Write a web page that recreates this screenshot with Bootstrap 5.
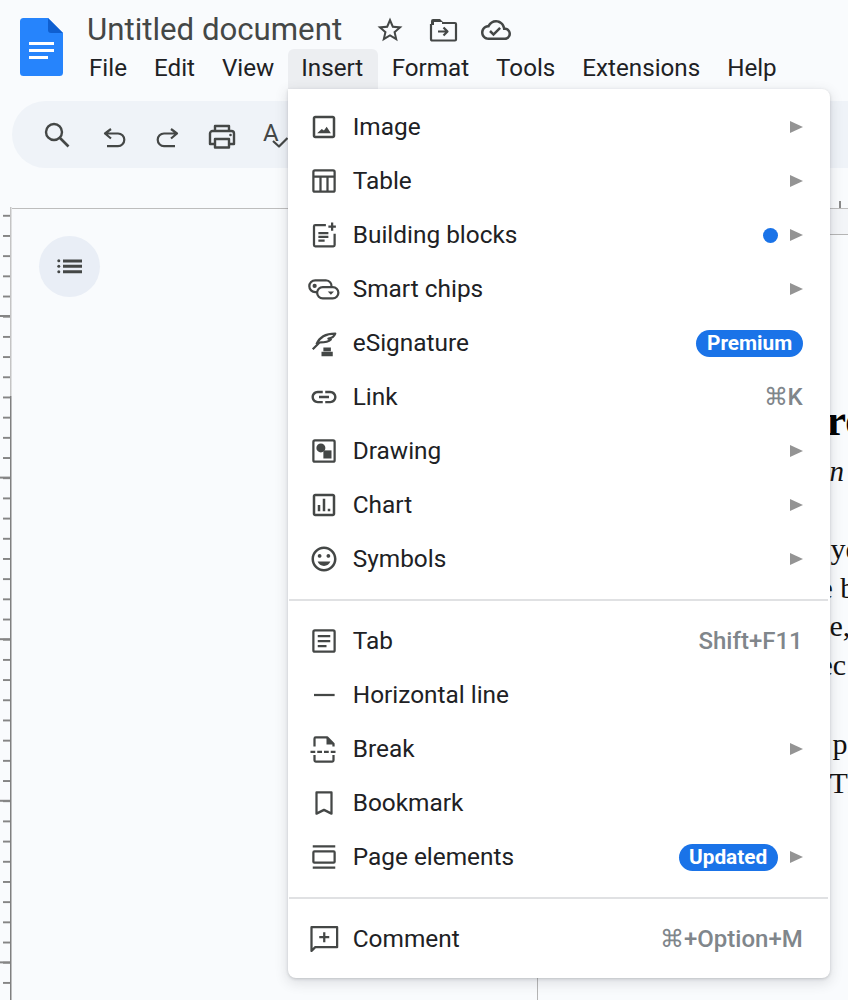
<!doctype html>
<html lang="en">
<head>
<meta charset="utf-8">
<title>Untitled document</title>
<link href="https://cdn.jsdelivr.net/npm/bootstrap@5.3.0/dist/css/bootstrap.min.css" rel="stylesheet">
<style>
html,body{height:1000px;overflow:hidden}
body{background:#f9fbfd;font-family:Roboto,"Liberation Sans",sans-serif;color:#202124}
svg{display:block;flex:none}
.ic{width:30px;height:30px;fill:#444746;overflow:visible}
.st{fill:none;stroke:#444746;stroke-width:1.8;stroke-linejoin:round}
.doc-head{padding:13px 0 0 20px;height:88px}
.doc-logo{width:43px;height:58px;margin-top:5px;margin-right:12.5px}
.doc-title-row{height:34px;margin-bottom:2px;padding-left:11.5px;gap:23px}
.doc-title{font-size:31.2px;line-height:34px;color:#444746;margin-right:10px;font-weight:400}
.doc-menubar{height:40px}
.doc-menubtn{font-size:24.2px;line-height:37px;padding:0 13.5px 2px;color:#202124;border:0;background:none;border-radius:0}
.dropdown.open-top>.doc-menubtn{background:#eceef1;border-radius:6px 6px 0 0;padding:0 15px 2px 13.5px;color:#202124;height:40px}
.doc-toolbar{height:67px;margin:13px 0 0 12px;background:#eff3f8;border-radius:33.5px 0 0 33.5px;padding-left:75px}
.doc-toolbtn{width:54px;height:67px;padding:0}
.doc-toolbtn svg{margin:0 auto}
.doc-searchbtn{margin-left:-57px;margin-right:3px}
.doc-work{margin-top:40px;height:792px}
.doc-vruler{width:11.5px;flex:none;margin-top:-1px;background-image:linear-gradient(#c4c4c4 189px,#808080 189px),linear-gradient(#858585 1.6px,transparent 1.6px),linear-gradient(#858585 1.6px,transparent 1.6px);background-repeat:no-repeat,repeat-y,repeat-y;background-size:1.5px 100%,7px 20.2px,10px 161.6px;background-position:10px 0,3px 28px,0 108px}
.doc-pageleft{width:526px;flex:none;border-top:1px solid #bdbdbd;border-right:1.5px solid #b5b5b5;padding:27px 0 0 27px}
.doc-tocbtn{width:61px;height:61px;border-radius:50%;background:#e9eef6;border:0;padding:0}
.doc-tocbtn svg{margin:-3px auto 0}
.doc-pageright{border-top:1px solid #bdbdbd;font-family:"Liberation Serif",serif;color:#111;white-space:nowrap;padding-left:292px;min-width:0}
.doc-hruler{height:26px;border-bottom:1px solid #b5b5b5;margin-left:-292px;background:#f3f5f8;position:relative}
.doc-hruler::after{content:"";position:absolute;right:7.5px;top:-8px;width:1.5px;height:7px;background:#8a8a8a}
.doc-lead{font-size:44px;line-height:44px;font-weight:700;margin-top:164px;color:#000;margin-left:-3px}
.doc-sub{font-size:29px;line-height:32px;font-style:italic;margin-top:12px}
.doc-ln{font-size:30px;line-height:38.500px}
.doc-gap1{margin-top:43px;margin-left:1px}
.doc-gap2{margin-top:41px;margin-left:3px}
.doc-cut{margin-left:-10px}
.doc-dd.dropdown-menu{display:block;position:absolute;left:0;top:100%;width:542px;margin:0;padding:11px 0 12px;background:#fff;border:0;border-radius:0 8px 8px 8px;box-shadow:0 1px 3px rgba(60,64,67,.22),0 4px 12px 2px rgba(60,64,67,.13);z-index:10}
.doc-dd .dropdown-item{height:54px;display:flex;align-items:center;padding:0 27px 0 21.5px;color:#202124;font-size:24.4px;line-height:54px;white-space:nowrap}
.doc-dd .dropdown-item .ic{margin-right:13.5px}
.doc-dd .dropdown-divider{margin:13px 2px 13px 1px;border-top:2px solid #e0e1e3;opacity:1}
.doc-arrow{width:0;height:0;border-left:13px solid #949494;border-top:6.5px solid transparent;border-bottom:6.5px solid transparent;margin-left:12px;flex:none}
.doc-dot{width:15px;height:15px;border-radius:50%;background:#1a73e8;flex:none}
.doc-pill.badge{background:#1a73e8;color:#fff;font-size:20.8px;font-weight:700;line-height:27px;padding:0 10.5px;height:27px;border-radius:14px}
.doc-key{color:#80868b;font-weight:500;font-size:24px}
</style>
</head>
<body>
<header class="doc-head d-flex">
  <svg class="doc-logo" viewBox="0 0 43 58"><path fill="#2684fc" d="M3.500 0H28l15 15v39.500a3.500 3.500 0 0 1-3.500 3.500h-36A3.500 3.500 0 0 1 0 54.500v-51A3.500 3.500 0 0 1 3.500 0z"/><path fill="#0f5fd0" d="M28 0l15 15H31a3 3 0 0 1-3-3z"/><path fill="#fff" d="M9 24h25v3H9zm0 7h25v3H9zm0 7h19v3H9z"/></svg>
  <div>
    <div class="doc-title-row d-flex align-items-center">
      <span class="doc-title">Untitled document</span>
      <svg class="ic" viewBox="0 0 24 24"><path d="M22 9.240l-7.190-.62L12 2 9.190 8.630 2 9.240l5.460 4.730L5.820 21 12 17.270 18.180 21l-1.630-7.030L22 9.240zM12 15.400l-3.760 2.270 1-4.280-3.320-2.880 4.380-.38L12 6.100l1.710 4.040 4.380.38-3.320 2.880 1 4.280L12 15.400z"/></svg>
      <svg class="ic" viewBox="0 0 30 30"><path fill="#444746" d="M3 6a2 2 0 0 1 2-2h7l3 3h-9v3H3z"/><path class="st" style="stroke-width:2.200" d="M3 9V24a1.500 1.500 0 0 0 1.500 1.500H27a1 1 0 0 0 1-1V9a1 1 0 0 0-1-1H14"/><path class="st" style="stroke-width:2.200" d="M10 16.500h9M15.500 12.500l4 4-4 4"/></svg>
      <svg class="ic" viewBox="0 0 24 24"><path d="M19.350 10.040C18.670 6.590 15.640 4 12 4 9.110 4 6.600 5.640 5.350 8.040 2.340 8.360 0 10.910 0 14c0 3.310 2.690 6 6 6h13c2.760 0 5-2.240 5-5 0-2.640-2.050-4.780-4.650-4.960zM19 18H6c-2.210 0-4-1.790-4-4 0-2.050 1.530-3.760 3.560-3.970l1.070-.11.500-.95C8.080 7.140 9.940 6 12 6c2.620 0 4.880 1.860 5.390 4.430l.300 1.500 1.530.11c1.560.100 2.780 1.410 2.780 2.960 0 1.650-1.350 3-3 3zm-9-3.820l-2.090-2.090L6.500 13.500 10 17l6.010-6.010-1.410-1.410z"/></svg>
    </div>
    <nav class="doc-menubar d-flex">
      <button class="btn doc-menubtn">File</button>
      <button class="btn doc-menubtn">Edit</button>
      <button class="btn doc-menubtn">View</button>
      <div class="dropdown open-top">
        <button class="btn doc-menubtn">Insert</button>
        <div class="dropdown-menu show doc-dd">
          <a class="dropdown-item" href="#"><svg class="ic" viewBox="0 0 24 24"><path d="M19 5v14H5V5h14m0-2H5c-1.100 0-2 .9-2 2v14c0 1.100.9 2 2 2h14c1.100 0 2-.9 2-2V5c0-1.100-.9-2-2-2zm-4.860 8.860l-2.200 2.870L10.200 13.500 6.500 17h11l-3.360-5.140z"/></svg>Image<span class="ms-auto doc-arrow"></span></a>
          <a class="dropdown-item" href="#"><svg class="ic" viewBox="0 0 24 24"><rect class="st" x="3.500" y="3.500" width="17" height="17" rx="1.200"/><path class="st" d="M3.500 8.500h17M9.200 8.500v12M14.800 8.500v12"/></svg>Table<span class="ms-auto doc-arrow"></span></a>
          <a class="dropdown-item" href="#"><svg class="ic" viewBox="0 0 24 24"><path class="st" d="M13.500 4H5a1 1 0 0 0-1 1v15a1 1 0 0 0 1 1h14.500a1 1 0 0 0 1-1v-9"/><path class="st" d="M18.500 2v6.500M15.500 5.200h6M7.500 10.500h8M7.500 13.500h8M7.500 16.500h5"/></svg>Building blocks<span class="ms-auto doc-dot"></span><span class="doc-arrow"></span></a>
          <a class="dropdown-item" href="#"><svg class="ic" viewBox="0 0 24 24"><path class="st" d="M18 10.500A4.700 4.700 0 0 0 13.500 5H5a4.700 4.700 0 0 0 0 9.500h1.500"/><rect class="st" x="6.500" y="10.500" width="17" height="9" rx="4.500"/><circle cx="4.500" cy="9.500" r="1.700"/><path d="M15 14h5l-2.500 2.500z"/></svg>Smart chips<span class="ms-auto doc-arrow"></span></a>
          <a class="dropdown-item" href="#"><svg class="ic" viewBox="0 0 24 24"><path class="st" d="M3 17l6-6M6 13C8 8 13 4.500 21 4.500 20 7 18 8.200 15.500 8.500l2 .7C15 11.500 12 11.500 9 11.500"/><path d="M11.500 15.500h6v3h-6zM10 19h9v3.500h-9z"/></svg>eSignature<span class="ms-auto badge rounded-pill doc-pill">Premium</span></a>
          <a class="dropdown-item" href="#"><svg class="ic" viewBox="0 0 24 24"><path d="M3.900 12c0-1.710 1.390-3.100 3.100-3.100h4V7H7c-2.760 0-5 2.240-5 5s2.240 5 5 5h4v-1.900H7c-1.710 0-3.100-1.390-3.100-3.100zM8 13h8v-2H8v2zm9-6h-4v1.900h4c1.710 0 3.100 1.390 3.100 3.100s-1.390 3.100-3.100 3.100h-4V17h4c2.760 0 5-2.240 5-5s-2.240-5-5-5z"/></svg>Link<span class="ms-auto doc-key">⌘K</span></a>
          <a class="dropdown-item" href="#"><svg class="ic" viewBox="0 0 24 24"><rect class="st" x="3.500" y="3.500" width="17" height="17" rx="1.200"/><circle cx="9.500" cy="9.500" r="3.600"/><path d="M11.500 11.500h6.500v6.500h-6.500z"/></svg>Drawing<span class="ms-auto doc-arrow"></span></a>
          <a class="dropdown-item" href="#"><svg class="ic" viewBox="0 0 24 24"><path d="M19 3H5c-1.100 0-2 .9-2 2v14c0 1.100.9 2 2 2h14c1.100 0 2-.9 2-2V5c0-1.100-.9-2-2-2zm0 16H5V5h14v14zM7 12h2v5H7zm4-5h2v10h-2zm4 8h2v2h-2z"/></svg>Chart<span class="ms-auto doc-arrow"></span></a>
          <a class="dropdown-item" href="#"><svg class="ic" viewBox="0 0 24 24"><path d="M11.990 2C6.470 2 2 6.480 2 12s4.470 10 9.990 10C17.520 22 22 17.520 22 12S17.520 2 11.990 2zM12 20c-4.420 0-8-3.580-8-8s3.580-8 8-8 8 3.580 8 8-3.580 8-8 8zm3.500-9c.83 0 1.500-.67 1.500-1.500S16.330 8 15.500 8 14 8.670 14 9.500s.67 1.500 1.500 1.500zm-7 0c.83 0 1.500-.67 1.500-1.500S9.330 8 8.500 8 7 8.670 7 9.500 7.670 11 8.500 11zm3.500 6.500c2.330 0 4.310-1.460 5.110-3.500H6.890c.8 2.040 2.780 3.500 5.110 3.500z"/></svg>Symbols<span class="ms-auto doc-arrow"></span></a>
          <hr class="dropdown-divider">
          <a class="dropdown-item" href="#"><svg class="ic" viewBox="0 0 24 24"><rect class="st" x="3.500" y="3.500" width="17" height="17" rx="1.200"/><path class="st" d="M7 8h10M7 12h10M7 16h7"/></svg>Tab<span class="ms-auto doc-key">Shift+F11</span></a>
          <a class="dropdown-item" href="#"><svg class="ic" viewBox="0 0 24 24"><path class="st" d="M4 12h16.500"/></svg>Horizontal line</a>
          <a class="dropdown-item" href="#"><svg class="ic" viewBox="0 0 24 24"><path class="st" d="M4.400 10V3.700a1 1 0 0 1 1-1H14.500l5.100 5.100V10M4.400 16.800V21a1 1 0 0 0 1 1h13.200a1 1 0 0 0 1-1v-4.200"/><path fill="#444746" d="M14 2.700l5.600 5.600H14z"/><path class="st" stroke-dasharray="3.800 1.600" d="M1.200 14.200h20.800"/></svg>Break<span class="ms-auto doc-arrow"></span></a>
          <a class="dropdown-item" href="#"><svg class="ic" viewBox="0 0 24 24"><path class="st" d="M6 3.500h12v17l-6-3-6 3z"/></svg>Bookmark</a>
          <a class="dropdown-item" href="#"><svg class="ic" viewBox="0 0 24 24"><path class="st" d="M3 3.500h18M3 20.500h18"/><rect class="st" x="3.500" y="7.500" width="17" height="9" rx=".8"/></svg>Page elements<span class="ms-auto badge rounded-pill doc-pill">Updated</span><span class="doc-arrow"></span></a>
          <hr class="dropdown-divider">
          <a class="dropdown-item" href="#"><svg class="ic" viewBox="0 0 24 24"><path class="st" d="M2 2.500h20.500v16H5l-3 3z"/><path class="st" d="M12.200 6.500v8M8.200 10.500h8"/></svg>Comment<span class="ms-auto doc-key">⌘+Option+M</span></a>
        </div>
      </div>
      <button class="btn doc-menubtn">Format</button>
      <button class="btn doc-menubtn">Tools</button>
      <button class="btn doc-menubtn">Extensions</button>
      <button class="btn doc-menubtn">Help</button>
    </nav>
  </div>
</header>
<div class="doc-toolbar d-flex align-items-center">
  <button class="btn doc-toolbtn doc-searchbtn"><svg class="ic" viewBox="0 0 30 30"><circle class="st" style="stroke-width:2.400" cx="12" cy="12" r="8"/><path class="st" style="stroke-width:2.600" d="M17.500 17.500l9 9"/></svg></button>
  <button class="btn doc-toolbtn"><svg class="ic" viewBox="0 0 30 30"><path class="st" style="stroke-width:2.200" d="M12 9l-6 4.500 6 5M6 13.500h13a6.300 6.300 0 0 1 0 12.600H8"/></svg></button>
  <button class="btn doc-toolbtn"><svg class="ic" viewBox="0 0 30 30"><path class="st" style="stroke-width:2.200" d="M18 9l6 4.500-6 5M24 13.500H11a6.300 6.300 0 0 0 0 12.600h11"/></svg></button>
  <button class="btn doc-toolbtn"><svg class="ic" viewBox="0 0 30 30"><path class="st" style="stroke-width:2.400" d="M8 11V6h14v5M8 24H3V13.500A2.500 2.500 0 0 1 5.500 11h19a2.500 2.500 0 0 1 2.500 2.500V24h-5"/><rect class="st" style="stroke-width:2.400" x="8" y="19" width="14" height="8.500"/><circle cx="23.500" cy="15" r="1.300"/></svg></button>
  <button class="btn doc-toolbtn"><svg class="ic" viewBox="0 0 30 30"><text x="2" y="21" font-family="Roboto,sans-serif" font-size="24" fill="#444746">A</text><path class="st" style="stroke-width:2.200" d="M12 21l6 5.500 8.500-8.500"/></svg></button>
</div>
<main class="doc-work d-flex">
  <div class="doc-vruler"></div>
  <div class="doc-pageleft">
    <button class="btn doc-tocbtn"><svg class="ic" viewBox="0 0 30 30"><path fill="#444746" d="M9 9.500h19v3H9zm0 5.300h19v3H9zm0 5.400h19v3H9z"/><circle cx="4.800" cy="10.800" r="1.500"/><circle cx="4.800" cy="16.300" r="1.500"/><circle cx="4.800" cy="21.700" r="1.500"/></svg></button>
  </div>
  <div class="doc-pageright flex-grow-1">
    <div class="doc-hruler"></div>
    <div class="doc-lead">re</div>
    <div class="doc-sub">n</div>
    <div class="doc-ln doc-gap1">ye</div>
    <div class="doc-ln doc-cut">e b</div>
    <div class="doc-ln">e,</div>
    <div class="doc-ln doc-cut">ec</div>
    <div class="doc-ln doc-gap2">p</div>
    <div class="doc-ln">Th</div>
  </div>
</main>
<script src="https://cdn.jsdelivr.net/npm/bootstrap@5.3.0/dist/js/bootstrap.bundle.min.js"></script>
</body>
</html>
